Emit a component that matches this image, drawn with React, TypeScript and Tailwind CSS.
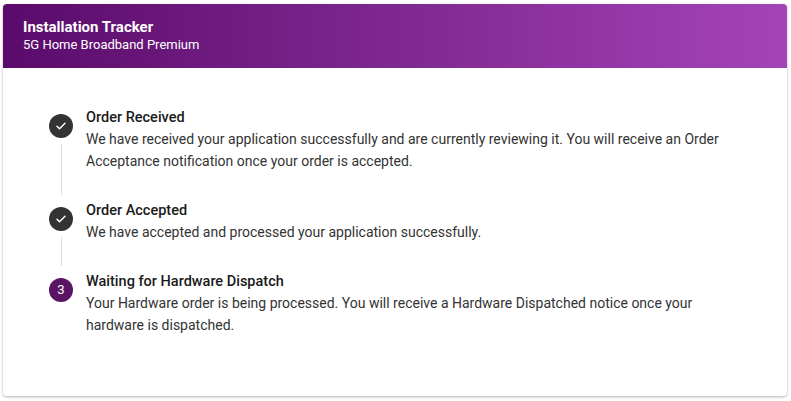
import React from "react";

const steps = [
  {
    title: "Order Received",
    body: "We have received your application successfully and are currently reviewing it. You will receive an Order Acceptance notification once your order is accepted.",
    done: true,
  },
  {
    title: "Order Accepted",
    body: "We have accepted and processed your application successfully.",
    done: true,
  },
  {
    title: "Waiting for Hardware Dispatch",
    body: "Your Hardware order is being processed. You will receive a Hardware Dispatched notice once your hardware is dispatched.",
    done: false,
  },
];

export default function App() {
  return (
    <div className="min-h-[401px] bg-white p-[3px] pt-[4px]" style={{ fontFamily: "Roboto, sans-serif" }}>
      <div className="h-[392px] w-[784px] overflow-hidden rounded-[4px] bg-white shadow-[0_1px_3px_rgba(0,0,0,0.3)]">
        <div className="h-[64px] bg-gradient-to-r from-[#5a0a6a] to-[#a543b9] px-[20px] pt-[14px] text-white">
          <div className="text-[15px] font-bold leading-[18px]">Installation Tracker</div>
          <div className="text-[13px] leading-[18px]">5G Home Broadband Premium</div>
        </div>
        <div className="pl-[46px] pr-[40px] pt-[40px]">
          {steps.map((s, i) => (
            <div key={i} className="flex">
              <div className="flex w-[37px] shrink-0 flex-col items-start">
                <div
                  className={`mt-[6px] flex h-[24px] w-[24px] items-center justify-center rounded-full text-[13px] text-white ${s.done ? "bg-[#333333]" : "bg-[#5a1464]"}`}
                >
                  {s.done ? (
                    <svg width="12" height="12" viewBox="0 0 24 24" fill="none" stroke="white" strokeWidth="3" strokeLinecap="round" strokeLinejoin="round">
                      <path d="M4 12.5l5 5L20 6.5" />
                    </svg>
                  ) : (
                    "3"
                  )}
                </div>
                {i < steps.length - 1 && <div className="ml-[12px] my-[6px] w-px flex-1 bg-[#dddddd]" />}
              </div>
              <div className="pb-[29px]">
                <div className="text-[14.5px] font-medium leading-[20px] text-[#1a1a1a]">{s.title}</div>
                <div className="text-[14px] leading-[22px] text-[#333333]">{s.body}</div>
              </div>
            </div>
          ))}
        </div>
      </div>
    </div>
  );
}
